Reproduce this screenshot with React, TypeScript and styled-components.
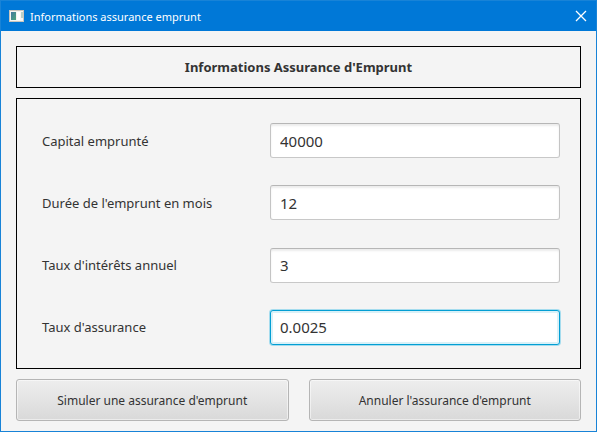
import React from "react";
import styled, { createGlobalStyle } from "styled-components";

const Global = createGlobalStyle`
  *, *::before, *::after { box-sizing: border-box; }
  html, body, #root { height: 100%; }
  body {
    margin: 0;
    font-family: "Noto Sans", "Open Sans", sans-serif;
    font-size: 13px;
    color: #333;
  }
`;

const Window = styled.div`
  min-height: 100%;
  display: flex;
  flex-direction: column;
  background: #f4f4f4;
  border: 1px solid #1883d7;
`;

const TitleBar = styled.header`
  display: flex;
  align-items: center;
  gap: 5px;
  height: 30px;
  padding: 0 9px 0 8px;
  background: #0078d7;
  color: #fff;
  font-size: 11px;
`;

const WindowTitle = styled.span`
  flex: 1;
`;

const CloseButton = styled.button`
  display: flex;
  padding: 0;
  border: 0;
  background: none;
  color: inherit;
`;

const Form = styled.form`
  flex: 1;
  display: flex;
  flex-direction: column;
  gap: 10px;
  padding: 15px 15px 10px;
`;

const Heading = styled.h1`
  margin: 0;
  border: 1px solid #000;
  font-size: 13px;
  font-weight: 700;
  line-height: 40px;
  text-align: center;
`;

const Fields = styled.div`
  flex: 1;
  display: flex;
  flex-direction: column;
  justify-content: space-between;
  padding: 24px 20px 23px 25px;
  border: 1px solid #000;
`;

const Field = styled.div`
  display: grid;
  grid-template-columns: 228px 1fr;
  align-items: center;
`;

const Input = styled.input<{ $active?: boolean }>`
  width: 100%;
  height: 35px;
  padding: 0 9px;
  border: 1px solid;
  border-color: ${(p) => (p.$active ? "#039ed3" : "#b6b6b6 #c4c4c4 #c8c8c8")};
  border-radius: 3px;
  background: #fff;
  box-shadow: ${(p) =>
    p.$active
      ? "0 0 0 1px #a5dcee, inset 0 0 0 2px #d9f1f8"
      : "inset 0 2px 2px #ededed"};
  color: #333;
  font: 15px "Noto Sans", sans-serif;
  outline: none;
`;

const Actions = styled.div`
  display: grid;
  grid-template-columns: 1fr 1fr;
  gap: 20px;
`;

const Button = styled.button`
  height: 42px;
  border: 1px solid #b5b5b5;
  border-radius: 3px;
  background: linear-gradient(#eee, #d9d9d9);
  box-shadow: inset 0 0 0 1px #ffffff80;
  color: #333;
  font: 12px "Noto Sans", sans-serif;
`;

const fields = [
  { id: "capital", label: "Capital emprunté", value: "40000" },
  { id: "duree", label: "Durée de l'emprunt en mois", value: "12" },
  { id: "interets", label: "Taux d'intérêts annuel", value: "3" },
  { id: "assurance", label: "Taux d'assurance", value: "0.0025", active: true },
];

function AppIcon() {
  return (
    <svg width="16" height="16" viewBox="0 0 16 16" aria-hidden="true">
      <defs>
        <linearGradient id="pane" x1="0" y1="0" x2="1" y2="1">
          <stop offset="0" stopColor="#4278a0" />
          <stop offset="1" stopColor="#4da67c" />
        </linearGradient>
      </defs>
      <rect x="0" y="2" width="15" height="12" fill="#c9c5bd" />
      <rect x="1" y="3" width="13" height="10" fill="#f5f5f2" />
      <rect x="2" y="4" width="5" height="8" fill="url(#pane)" />
      <rect x="8" y="4" width="3" height="8" fill="#fff" />
      <rect x="12" y="4" width="2" height="6" fill="#b9d0c8" />
    </svg>
  );
}

export default function App() {
  return (
    <Window>
      <Global />
      <TitleBar>
        <AppIcon />
        <WindowTitle>Informations assurance emprunt</WindowTitle>
        <CloseButton type="button" aria-label="Fermer">
          <svg width="12" height="12" viewBox="0 0 12 12" stroke="currentColor" strokeWidth="1.3">
            <path d="M1 1L11 11M11 1L1 11" />
          </svg>
        </CloseButton>
      </TitleBar>
      <Form>
        <Heading>Informations Assurance d'Emprunt</Heading>
        <Fields>
          {fields.map((f) => (
            <Field key={f.id}>
              <label htmlFor={f.id}>{f.label}</label>
              <Input id={f.id} type="text" defaultValue={f.value} $active={f.active} />
            </Field>
          ))}
        </Fields>
        <Actions>
          <Button type="button">Simuler une assurance d'emprunt</Button>
          <Button type="button">Annuler l'assurance d'emprunt</Button>
        </Actions>
      </Form>
    </Window>
  );
}
